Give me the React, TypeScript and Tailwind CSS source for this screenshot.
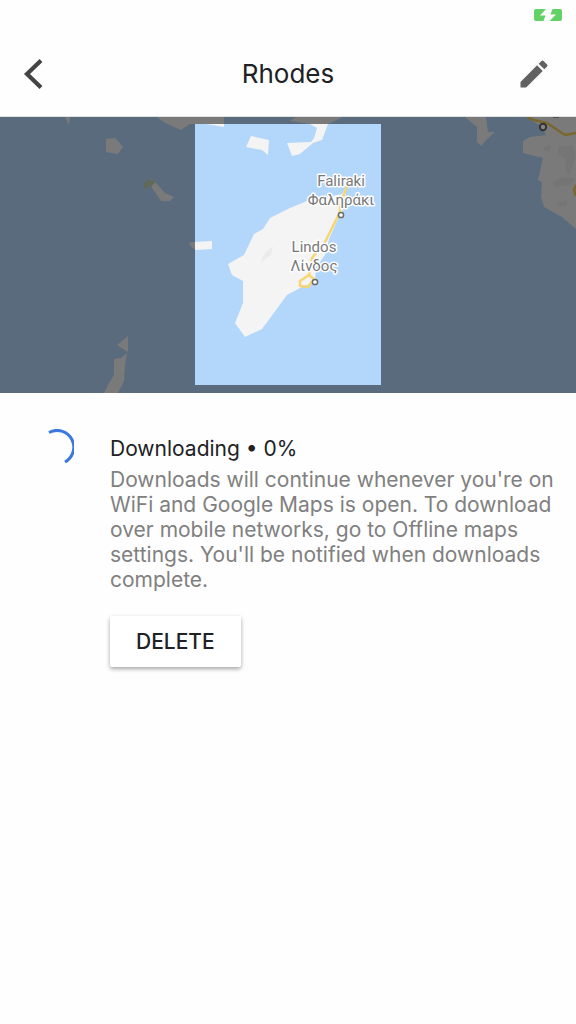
import { useState } from "react";

const LAND = [
  "65,0 70,0 69,8",
  "157,0 165,6 181,13 190,7 206,7 224,10 224,0",
  "296,0 290,4 310,7 317,11 314,21 311,25 287,26 292,39 300,37 313,26 322,23 328,7 343,0",
  "251,19 269,23 268,38 262,33 246,30",
  "106,22 115,21 118,24 123,30 118,37 106,35",
  "150,61 157,67 165,76 174,80 170,84 161,84 157,78 152,71",
  "189,126 193,125 212,124 212,132 196,133 192,131",
  "128,219 128,235 117,228",
  "127,236 121,241 114,242 114,258 108,268 104,276 118,276 124,264 125,248",
  "345,72 342,77 307,84 290,91 270,101 263,112 254,117 244,138 228,147 232,158 243,164 243,186 235,206 245,220 262,212 287,178 302,170 315,165 316,150 325,138 329,122 338,102 346,86",
  "465,0 477,10 477,25 481,29 487,22 495,15 488,15 486,0",
  "527,0 534,5 541,9 546,18 530,20 523,24 523,36 543,41 538,63 542,65 541,80 544,90 562,100 576,112 576,0",
];

const HILLS = [
  "260,146 264,137 273,129 271,138 264,143",
  "558,30 572,28 576,38 570,58 565,52 566,42 558,38",
  "552,66 562,60 576,61 570,68 556,70",
  "556,86 568,82 566,89 560,90",
  "544,30 551,28 550,35 544,34",
];

const LABELS = [
  { text: "Faliraki", x: 341, y: 69 },
  { text: "Φαληράκι", x: 341, y: 88 },
  { text: "Lindos", x: 314, y: 135 },
  { text: "Λίνδος", x: 314, y: 154 },
];

const TOWNS = [
  { x: 341, y: 98 },
  { x: 315, y: 165 },
];

const MapPreview = () => {
  return (
    <svg
      viewBox="0 0 576 276"
      className="block w-full bg-[#5a6b7d]"
      role="img"
      aria-label="Rhodes"
    >
      <rect width="576" height="276" fill="#b2d7fa" />
      {LAND.map((points) => (
        <polygon key={points} points={points} fill="#f4f4f4" />
      ))}
      {HILLS.map((points) => (
        <polygon key={points} points={points} fill="#ebebeb" />
      ))}
      <path d="M143 66l7-4 6 3-5 4-7 3z" fill="#c3d3b0" />
      <g fill="none" stroke="#f7d672" strokeWidth="2.5" strokeLinejoin="round">
        <path d="M347 69L340 88V95L325 125L312 141L309 158" />
        <path d="M309 158L300 164V169L308 170L314 162Z" />
        <path d="M527 0L534 3L547 6L565 18L576 16" stroke="#f0d060" />
        <path d="M576 68L574 73L576 79" stroke="#f0d060" />
      </g>
      {TOWNS.map((town) => (
        <circle
          key={town.x}
          cx={town.x}
          cy={town.y}
          r="2.6"
          fill="#fff"
          stroke="#6b6b6b"
          strokeWidth="1.5"
        />
      ))}
      {LABELS.map((label) => (
        <text
          key={label.text}
          x={label.x}
          y={label.y}
          textAnchor="middle"
          fill="#77787a"
          stroke="#fff"
          strokeWidth="3"
          strokeLinejoin="round"
          paintOrder="stroke"
          className="font-['Roboto',sans-serif] text-[15px]"
        >
          {label.text}
        </text>
      ))}
      <path
        d="M0 0H576V276H0Z M195 7V268H381V7Z"
        fillRule="evenodd"
        fillOpacity="0.5"
      />
      <circle
        cx="543"
        cy="10"
        r="3.2"
        fill="#858585"
        stroke="#333"
        strokeWidth="2"
      />
      <path d="M553 0h6" stroke="#444" strokeWidth="1.5" />
    </svg>
  );
};

const Spinner = () => {
  return (
    <svg
      viewBox="0 0 36 36"
      className="size-9"
      role="img"
      aria-label="Downloading"
    >
      <path
        d="M11 3.500A15.800 15.800 0 0 1 27 33"
        fill="none"
        stroke="#3b78e0"
        strokeWidth="3"
      />
    </svg>
  );
};

const App = () => {
  const [deleted, setDeleted] = useState(false);

  return (
    <div className="min-h-screen bg-[#fefefe] font-['Inter',sans-serif] text-[#202124]">
      <div className="flex h-8 justify-end px-3.5 pt-2">
        <svg viewBox="0 0 28 12" className="h-3.5 w-7" aria-hidden="true">
          <path
            d="M2 0H12L6 6.5H11.500L9.500 12H2Q0 12 0 10V2Q0 0 2 0Z"
            fill="#62d266"
          />
          <path
            d="M18.500 0H26Q28 0 28 2V10Q28 12 26 12H15.500L22 5.500H16.500Z"
            fill="#62d266"
          />
        </svg>
      </div>
      <header className="flex h-[85px] items-center justify-between border-b border-[#dfe1e3] pr-5 pl-4">
        <button type="button" aria-label="Back" className="w-12 p-1">
          <svg viewBox="0 0 28 36" className="h-9 w-7">
            <path
              d="M21 4.500L7 18L21 31.500"
              fill="none"
              stroke="#444"
              strokeWidth="4.2"
            />
          </svg>
        </button>
        <h1 className="text-[26px] leading-8">Rhodes</h1>
        <button type="button" aria-label="Edit" className="p-1">
          <svg viewBox="0 0 24 24" className="size-9" fill="#616161">
            <path d="M3 17.250V21h3.750L17.810 9.940l-3.750-3.750L3 17.250zM20.710 7.040a1 1 0 0 0 0-1.410l-2.340-2.340a1 1 0 0 0-1.410 0l-1.830 1.830 3.750 3.750 1.830-1.830z" />
          </svg>
        </button>
      </header>
      <MapPreview />
      <main className="flex gap-9 pt-9 pr-5 pl-[38px]">
        <div className="shrink-0">
          <Spinner />
        </div>
        <section>
          {deleted ? (
            <p className="pt-1.5 text-[21px] leading-7">Deleted</p>
          ) : (
            <>
              <p className="pt-1.5 text-[21px] leading-7">Downloading • 0%</p>
              <p className="mt-1 text-[21px] leading-[25px] text-[#808080]">
                Downloads will continue whenever you're on WiFi and Google Maps
                is open. To download over mobile networks, go to Offline maps
                settings. You'll be notified when downloads complete.
              </p>
              <button
                type="button"
                className="mt-6 h-[51px] rounded-xs bg-white px-[26px] text-[21px] font-medium shadow-[0_2px_4px_rgba(0,0,0,0.35)]"
                onClick={() => setDeleted(true)}
              >
                DELETE
              </button>
            </>
          )}
        </section>
      </main>
    </div>
  );
};

export default App;
